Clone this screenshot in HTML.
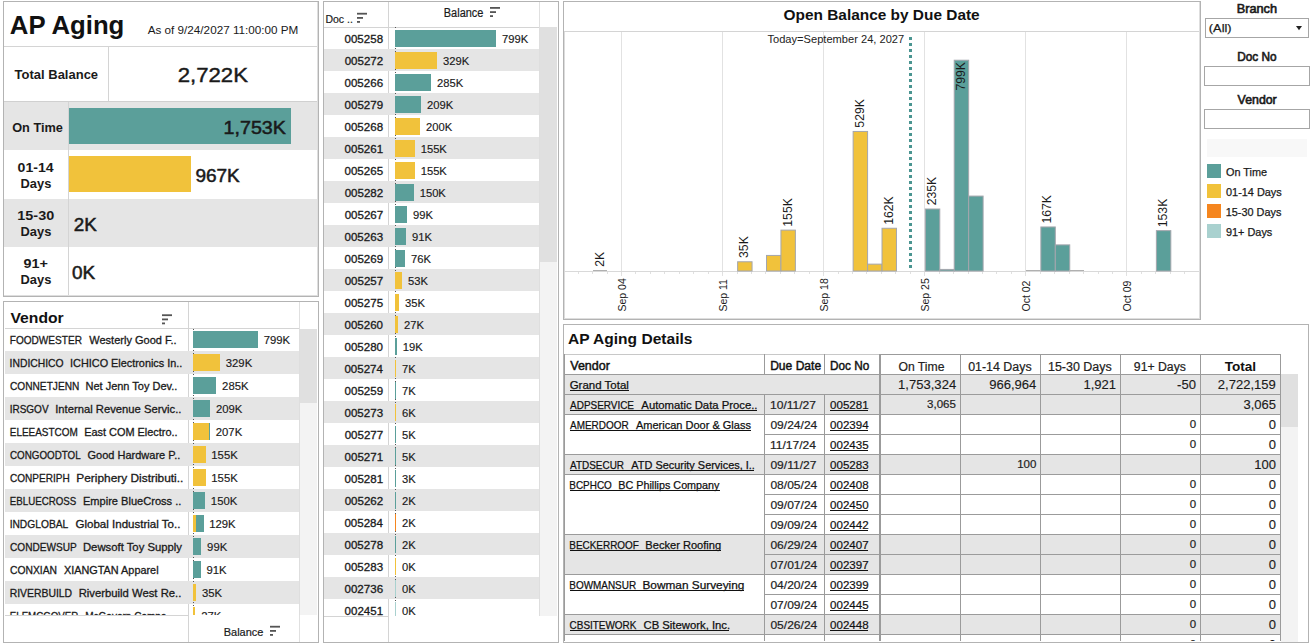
<!DOCTYPE html>
<html><head><meta charset="utf-8"><style>
html,body{margin:0;padding:0;background:#fff;width:1311px;height:643px;overflow:hidden}
svg{display:block}
text{font-family:"Liberation Sans", sans-serif;white-space:pre}
</style></head><body>
<svg width="1311" height="643" viewBox="0 0 1311 643" shape-rendering="crispEdges">
<rect x="0" y="0" width="1311" height="643" fill="#fff"/>
<rect x="3" y="1" width="316" height="1" fill="#b3b3b3" />
<rect x="3" y="296" width="316" height="1" fill="#b3b3b3" />
<rect x="3" y="1" width="1" height="296" fill="#b3b3b3" />
<rect x="318" y="1" width="1" height="296" fill="#b3b3b3" />
<text x="9.86" y="34.00" font-size="26.5" font-weight="bold" fill="#111" textLength="114.50" lengthAdjust="spacingAndGlyphs" >AP Aging</text>
<text x="147.70" y="34.00" font-size="11.2" font-weight="normal" fill="#1a1a1a" textLength="150.69" lengthAdjust="spacingAndGlyphs" >As of 9/24/2027 11:00:00 PM</text>
<rect x="4" y="46" width="314" height="1" fill="#d4d4d4" />
<text x="14.57" y="79.40" font-size="13" font-weight="bold" fill="#1a1a1a" textLength="83.52" lengthAdjust="spacingAndGlyphs" >Total Balance</text>
<rect x="108" y="47" width="1" height="54" fill="#d4d4d4" />
<text x="177.69" y="82.00" font-size="20" font-weight="normal" fill="#1a1a1a" stroke="#1a1a1a" stroke-width="0.4" textLength="70.22" lengthAdjust="spacingAndGlyphs" >2,722K</text>
<rect x="4" y="101" width="314" height="1" fill="#d0d0d0" />
<rect x="4" y="102" width="314" height="48" fill="#e5e5e5" />
<rect x="4" y="150" width="314" height="49" fill="#ffffff" />
<rect x="4" y="199" width="314" height="48" fill="#e5e5e5" />
<rect x="4" y="247" width="314" height="49" fill="#ffffff" />
<rect x="68" y="102" width="1" height="194" fill="#d4d4d4" />
<text x="12.19" y="132.00" font-size="12.3" font-weight="bold" fill="#1a1a1a" textLength="50.79" lengthAdjust="spacingAndGlyphs" >On Time</text>
<text x="17.64" y="172.10" font-size="12.3" font-weight="bold" fill="#1a1a1a" textLength="36.07" lengthAdjust="spacingAndGlyphs" >01-14</text>
<text x="20.56" y="187.80" font-size="12.3" font-weight="bold" fill="#1a1a1a" textLength="30.76" lengthAdjust="spacingAndGlyphs" >Days</text>
<text x="17.33" y="220.20" font-size="12.3" font-weight="bold" fill="#1a1a1a" textLength="36.88" lengthAdjust="spacingAndGlyphs" >15-30</text>
<text x="20.56" y="235.80" font-size="12.3" font-weight="bold" fill="#1a1a1a" textLength="30.76" lengthAdjust="spacingAndGlyphs" >Days</text>
<text x="23.50" y="267.70" font-size="12.3" font-weight="bold" fill="#1a1a1a" textLength="24.40" lengthAdjust="spacingAndGlyphs" >91+</text>
<text x="20.56" y="283.60" font-size="12.3" font-weight="bold" fill="#1a1a1a" textLength="30.76" lengthAdjust="spacingAndGlyphs" >Days</text>
<rect x="69" y="108" width="222" height="36" fill="#5b9f9a" />
<rect x="69" y="156" width="122" height="36" fill="#f1c23b" />
<text x="223.57" y="133.60" font-size="17.5" font-weight="normal" fill="#1a1a1a" stroke="#1a1a1a" stroke-width="0.5" textLength="62.36" lengthAdjust="spacingAndGlyphs" >1,753K</text>
<text x="195.40" y="181.80" font-size="17.5" font-weight="normal" fill="#1a1a1a" stroke="#1a1a1a" stroke-width="0.5" textLength="44.35" lengthAdjust="spacingAndGlyphs" >967K</text>
<text x="73.81" y="230.70" font-size="17.5" font-weight="normal" fill="#1a1a1a" stroke="#1a1a1a" stroke-width="0.5" textLength="22.99" lengthAdjust="spacingAndGlyphs" >2K</text>
<text x="71.99" y="278.80" font-size="17.5" font-weight="normal" fill="#1a1a1a" stroke="#1a1a1a" stroke-width="0.5" textLength="23.21" lengthAdjust="spacingAndGlyphs" >0K</text>
<rect x="3" y="301" width="316" height="1" fill="#b3b3b3" />
<rect x="3" y="642" width="316" height="1" fill="#b3b3b3" />
<rect x="3" y="301" width="1" height="342" fill="#b3b3b3" />
<rect x="318" y="301" width="1" height="342" fill="#b3b3b3" />
<text x="10.52" y="323.00" font-size="15" font-weight="bold" fill="#111" textLength="53.21" lengthAdjust="spacingAndGlyphs" >Vendor</text>
<g shape-rendering="auto"><rect x="162" y="314.3" width="10" height="1.8" fill="#555"/><rect x="162" y="318.5" width="6" height="1.8" fill="#555"/><rect x="162" y="322.5" width="3" height="1.8" fill="#555"/></g>
<rect x="5" y="328" width="294" height="1" fill="#d4d4d4" />
<rect x="188" y="302" width="1" height="340" fill="#d4d4d4" />
<rect x="299" y="302" width="1" height="340" fill="#e0e0e0" />
<clipPath id="vclip"><rect x="5" y="329" width="294" height="286"/></clipPath><g clip-path="url(#vclip)">
<rect x="5" y="351" width="294" height="23" fill="#e5e5e5" />
<rect x="5" y="397" width="294" height="23" fill="#e5e5e5" />
<rect x="5" y="443" width="294" height="23" fill="#e5e5e5" />
<rect x="5" y="489" width="294" height="23" fill="#e5e5e5" />
<rect x="5" y="535" width="294" height="23" fill="#e5e5e5" />
<rect x="5" y="581" width="294" height="23" fill="#e5e5e5" />
<line x1="193.5" y1="329" x2="193.5" y2="615" stroke="#555" stroke-width="1" stroke-dasharray="1 2"/>
<text x="9.74" y="344.10" font-size="11" font-weight="normal" fill="#1a1a1a" stroke="#1a1a1a" stroke-width="0.3" textLength="72.18" lengthAdjust="spacingAndGlyphs" >FOODWESTER</text>
<text x="89.29" y="344.10" font-size="11" font-weight="normal" fill="#1a1a1a" stroke="#1a1a1a" stroke-width="0.3" textLength="87.29" lengthAdjust="spacingAndGlyphs" >Westerly Good F..</text>
<rect x="193.30" y="331" width="64.64" height="17" fill="#5b9f9a" />
<text x="263.67" y="344.10" font-size="11" font-weight="normal" fill="#1a1a1a" stroke="#1a1a1a" stroke-width="0.15" textLength="26.46" lengthAdjust="spacingAndGlyphs" >799K</text>
<text x="9.62" y="367.10" font-size="11" font-weight="normal" fill="#1a1a1a" stroke="#1a1a1a" stroke-width="0.3" textLength="54.02" lengthAdjust="spacingAndGlyphs" >INDICHICO</text>
<text x="70.07" y="367.10" font-size="11" font-weight="normal" fill="#1a1a1a" stroke="#1a1a1a" stroke-width="0.3" textLength="112.27" lengthAdjust="spacingAndGlyphs" >ICHICO Electronics In..</text>
<rect x="193.30" y="354" width="26.62" height="17" fill="#f1c23b" />
<text x="225.76" y="367.10" font-size="11" font-weight="normal" fill="#1a1a1a" stroke="#1a1a1a" stroke-width="0.15" textLength="26.46" lengthAdjust="spacingAndGlyphs" >329K</text>
<text x="10.04" y="390.10" font-size="11" font-weight="normal" fill="#1a1a1a" stroke="#1a1a1a" stroke-width="0.3" textLength="69.25" lengthAdjust="spacingAndGlyphs" >CONNETJENN</text>
<text x="85.47" y="390.10" font-size="11" font-weight="normal" fill="#1a1a1a" stroke="#1a1a1a" stroke-width="0.3" textLength="91.88" lengthAdjust="spacingAndGlyphs" >Net Jenn Toy Dev..</text>
<rect x="193.30" y="377" width="23.06" height="17" fill="#5b9f9a" />
<text x="222.09" y="390.10" font-size="11" font-weight="normal" fill="#1a1a1a" stroke="#1a1a1a" stroke-width="0.15" textLength="26.46" lengthAdjust="spacingAndGlyphs" >285K</text>
<text x="9.65" y="413.10" font-size="11" font-weight="normal" fill="#1a1a1a" stroke="#1a1a1a" stroke-width="0.3" textLength="38.95" lengthAdjust="spacingAndGlyphs" >IRSGOV</text>
<text x="55.24" y="413.10" font-size="11" font-weight="normal" fill="#1a1a1a" stroke="#1a1a1a" stroke-width="0.3" textLength="126.16" lengthAdjust="spacingAndGlyphs" >Internal Revenue Servic..</text>
<rect x="193.30" y="400" width="16.91" height="17" fill="#5b9f9a" />
<text x="215.94" y="413.10" font-size="11" font-weight="normal" fill="#1a1a1a" stroke="#1a1a1a" stroke-width="0.15" textLength="26.46" lengthAdjust="spacingAndGlyphs" >209K</text>
<text x="9.75" y="436.10" font-size="11" font-weight="normal" fill="#1a1a1a" stroke="#1a1a1a" stroke-width="0.3" textLength="68.04" lengthAdjust="spacingAndGlyphs" >ELEEASTCOM</text>
<text x="84.18" y="436.10" font-size="11" font-weight="normal" fill="#1a1a1a" stroke="#1a1a1a" stroke-width="0.3" textLength="93.49" lengthAdjust="spacingAndGlyphs" >East COM Electro..</text>
<rect x="193.30" y="423" width="15.78" height="17" fill="#f1c23b" />
<rect x="209.08" y="423" width="0.97" height="17" fill="#5b9f9a" />
<text x="215.78" y="436.10" font-size="11" font-weight="normal" fill="#1a1a1a" stroke="#1a1a1a" stroke-width="0.15" textLength="26.46" lengthAdjust="spacingAndGlyphs" >207K</text>
<text x="10.06" y="459.10" font-size="11" font-weight="normal" fill="#1a1a1a" stroke="#1a1a1a" stroke-width="0.3" textLength="70.58" lengthAdjust="spacingAndGlyphs" >CONGOODTOL</text>
<text x="87.50" y="459.10" font-size="11" font-weight="normal" fill="#1a1a1a" stroke="#1a1a1a" stroke-width="0.3" textLength="92.85" lengthAdjust="spacingAndGlyphs" >Good Hardware P..</text>
<rect x="193.30" y="446" width="12.54" height="17" fill="#f1c23b" />
<text x="211.29" y="459.10" font-size="11" font-weight="normal" fill="#1a1a1a" stroke="#1a1a1a" stroke-width="0.15" textLength="26.46" lengthAdjust="spacingAndGlyphs" >155K</text>
<text x="10.05" y="482.10" font-size="11" font-weight="normal" fill="#1a1a1a" stroke="#1a1a1a" stroke-width="0.3" textLength="59.71" lengthAdjust="spacingAndGlyphs" >CONPERIPH</text>
<text x="76.30" y="482.10" font-size="11" font-weight="normal" fill="#1a1a1a" stroke="#1a1a1a" stroke-width="0.3" textLength="107.06" lengthAdjust="spacingAndGlyphs" >Periphery Distributi..</text>
<rect x="193.30" y="469" width="12.54" height="17" fill="#f1c23b" />
<text x="211.29" y="482.10" font-size="11" font-weight="normal" fill="#1a1a1a" stroke="#1a1a1a" stroke-width="0.15" textLength="26.46" lengthAdjust="spacingAndGlyphs" >155K</text>
<text x="9.77" y="505.10" font-size="11" font-weight="normal" fill="#1a1a1a" stroke="#1a1a1a" stroke-width="0.3" textLength="66.42" lengthAdjust="spacingAndGlyphs" >EBLUECROSS</text>
<text x="82.96" y="505.10" font-size="11" font-weight="normal" fill="#1a1a1a" stroke="#1a1a1a" stroke-width="0.3" textLength="98.40" lengthAdjust="spacingAndGlyphs" >Empire BlueCross ..</text>
<rect x="193.30" y="492" width="12.13" height="17" fill="#5b9f9a" />
<text x="210.89" y="505.10" font-size="11" font-weight="normal" fill="#1a1a1a" stroke="#1a1a1a" stroke-width="0.15" textLength="26.46" lengthAdjust="spacingAndGlyphs" >150K</text>
<text x="9.63" y="528.10" font-size="11" font-weight="normal" fill="#1a1a1a" stroke="#1a1a1a" stroke-width="0.3" textLength="58.62" lengthAdjust="spacingAndGlyphs" >INDGLOBAL</text>
<text x="75.47" y="528.10" font-size="11" font-weight="normal" fill="#1a1a1a" stroke="#1a1a1a" stroke-width="0.3" textLength="104.95" lengthAdjust="spacingAndGlyphs" >Global Industrial To..</text>
<rect x="193.30" y="515" width="2.83" height="17" fill="#f1c23b" />
<rect x="196.13" y="515" width="7.60" height="17" fill="#5b9f9a" />
<text x="209.19" y="528.10" font-size="11" font-weight="normal" fill="#1a1a1a" stroke="#1a1a1a" stroke-width="0.15" textLength="26.46" lengthAdjust="spacingAndGlyphs" >129K</text>
<text x="10.05" y="551.10" font-size="11" font-weight="normal" fill="#1a1a1a" stroke="#1a1a1a" stroke-width="0.3" textLength="66.62" lengthAdjust="spacingAndGlyphs" >CONDEWSUP</text>
<text x="82.95" y="551.10" font-size="11" font-weight="normal" fill="#1a1a1a" stroke="#1a1a1a" stroke-width="0.3" textLength="99.09" lengthAdjust="spacingAndGlyphs" >Dewsoft Toy Supply</text>
<rect x="193.30" y="538" width="8.01" height="17" fill="#5b9f9a" />
<text x="207.10" y="551.10" font-size="11" font-weight="normal" fill="#1a1a1a" stroke="#1a1a1a" stroke-width="0.15" textLength="20.16" lengthAdjust="spacingAndGlyphs" >99K</text>
<text x="10.03" y="574.10" font-size="11" font-weight="normal" fill="#1a1a1a" stroke="#1a1a1a" stroke-width="0.3" textLength="47.06" lengthAdjust="spacingAndGlyphs" >CONXIAN</text>
<text x="63.88" y="574.10" font-size="11" font-weight="normal" fill="#1a1a1a" stroke="#1a1a1a" stroke-width="0.3" textLength="94.70" lengthAdjust="spacingAndGlyphs" >XIANGTAN Apparel</text>
<rect x="193.30" y="561" width="7.36" height="17" fill="#5b9f9a" />
<text x="206.45" y="574.10" font-size="11" font-weight="normal" fill="#1a1a1a" stroke="#1a1a1a" stroke-width="0.15" textLength="20.16" lengthAdjust="spacingAndGlyphs" >91K</text>
<text x="9.72" y="597.10" font-size="11" font-weight="normal" fill="#1a1a1a" stroke="#1a1a1a" stroke-width="0.3" textLength="62.42" lengthAdjust="spacingAndGlyphs" >RIVERBUILD</text>
<text x="78.65" y="597.10" font-size="11" font-weight="normal" fill="#1a1a1a" stroke="#1a1a1a" stroke-width="0.3" textLength="102.73" lengthAdjust="spacingAndGlyphs" >Riverbuild West Re..</text>
<rect x="193.30" y="584" width="2.83" height="17" fill="#f1c23b" />
<text x="201.98" y="597.10" font-size="11" font-weight="normal" fill="#1a1a1a" stroke="#1a1a1a" stroke-width="0.15" textLength="20.16" lengthAdjust="spacingAndGlyphs" >35K</text>
<text x="9.77" y="620.10" font-size="11" font-weight="normal" fill="#1a1a1a" stroke="#1a1a1a" stroke-width="0.3" textLength="68.54" lengthAdjust="spacingAndGlyphs" >ELEMCGOVER</text>
<text x="85.15" y="620.10" font-size="11" font-weight="normal" fill="#1a1a1a" stroke="#1a1a1a" stroke-width="0.3" textLength="86.95" lengthAdjust="spacingAndGlyphs" >McGovern Compa..</text>
<rect x="193.30" y="607" width="2.18" height="17" fill="#f1c23b" />
<text x="201.22" y="620.10" font-size="11" font-weight="normal" fill="#1a1a1a" stroke="#1a1a1a" stroke-width="0.15" textLength="20.16" lengthAdjust="spacingAndGlyphs" >27K</text>
</g>
<rect x="5" y="615" width="183" height="1" fill="#d4d4d4" />
<rect x="300" y="329" width="17" height="286" fill="#f3f3f3" />
<rect x="300" y="329" width="17" height="74" fill="#e0e0e0" />
<rect x="299" y="329" width="1" height="286" fill="#dedede" />
<text x="223.72" y="636.00" font-size="11.5" font-weight="normal" fill="#1a1a1a" stroke="#1a1a1a" stroke-width="0.2" textLength="39.66" lengthAdjust="spacingAndGlyphs" >Balance</text>
<g shape-rendering="auto"><rect x="270" y="625.8" width="10" height="1.8" fill="#555"/><rect x="270" y="630.0" width="6" height="1.8" fill="#555"/><rect x="270" y="634.0" width="3" height="1.8" fill="#555"/></g>
<rect x="323" y="1" width="236" height="1" fill="#b3b3b3" />
<rect x="323" y="642" width="236" height="1" fill="#b3b3b3" />
<rect x="323" y="1" width="1" height="642" fill="#b3b3b3" />
<rect x="558" y="1" width="1" height="642" fill="#b3b3b3" />
<text x="325.46" y="22.80" font-size="11.5" font-weight="normal" fill="#1a1a1a" stroke="#1a1a1a" stroke-width="0.2" textLength="27.40" lengthAdjust="spacingAndGlyphs" >Doc ..</text>
<g shape-rendering="auto"><rect x="357" y="12.8" width="10" height="1.8" fill="#555"/><rect x="357" y="17.0" width="6" height="1.8" fill="#555"/><rect x="357" y="21.0" width="3" height="1.8" fill="#555"/></g>
<text x="443.82" y="17.00" font-size="12" font-weight="normal" fill="#1a1a1a" stroke="#1a1a1a" stroke-width="0.2" textLength="39.56" lengthAdjust="spacingAndGlyphs" >Balance</text>
<g shape-rendering="auto"><rect x="490" y="7" width="10" height="1.8" fill="#555"/><rect x="490" y="11.2" width="6" height="1.8" fill="#555"/><rect x="490" y="15.2" width="3" height="1.8" fill="#555"/></g>
<rect x="324" y="27" width="216" height="1" fill="#d4d4d4" />
<rect x="388" y="2" width="1" height="640" fill="#d4d4d4" />
<rect x="539" y="2" width="1" height="25" fill="#e0e0e0" />
<clipPath id="dclip"><rect x="324" y="27" width="215" height="589"/></clipPath><g clip-path="url(#dclip)">
<rect x="324" y="49" width="215" height="22" fill="#e5e5e5" />
<rect x="324" y="93" width="215" height="22" fill="#e5e5e5" />
<rect x="324" y="137" width="215" height="22" fill="#e5e5e5" />
<rect x="324" y="181" width="215" height="22" fill="#e5e5e5" />
<rect x="324" y="225" width="215" height="22" fill="#e5e5e5" />
<rect x="324" y="269" width="215" height="22" fill="#e5e5e5" />
<rect x="324" y="313" width="215" height="22" fill="#e5e5e5" />
<rect x="324" y="357" width="215" height="22" fill="#e5e5e5" />
<rect x="324" y="401" width="215" height="22" fill="#e5e5e5" />
<rect x="324" y="445" width="215" height="22" fill="#e5e5e5" />
<rect x="324" y="489" width="215" height="22" fill="#e5e5e5" />
<rect x="324" y="533" width="215" height="22" fill="#e5e5e5" />
<rect x="324" y="577" width="215" height="22" fill="#e5e5e5" />
<line x1="395.5" y1="27" x2="395.5" y2="616" stroke="#555" stroke-width="1" stroke-dasharray="1 2"/>
<text x="344.54" y="42.80" font-size="11" font-weight="normal" fill="#1a1a1a" stroke="#1a1a1a" stroke-width="0.3" textLength="38.54" lengthAdjust="spacingAndGlyphs" >005258</text>
<rect x="395" y="30" width="101" height="17" fill="#5b9f9a" />
<text x="501.94" y="42.80" font-size="11" font-weight="normal" fill="#1a1a1a" stroke="#1a1a1a" stroke-width="0.15" textLength="26.20" lengthAdjust="spacingAndGlyphs" >799K</text>
<text x="344.66" y="64.80" font-size="11" font-weight="normal" fill="#1a1a1a" stroke="#1a1a1a" stroke-width="0.3" textLength="38.54" lengthAdjust="spacingAndGlyphs" >005272</text>
<rect x="395" y="52" width="42" height="17" fill="#f1c23b" />
<text x="443.05" y="64.80" font-size="11" font-weight="normal" fill="#1a1a1a" stroke="#1a1a1a" stroke-width="0.15" textLength="26.20" lengthAdjust="spacingAndGlyphs" >329K</text>
<text x="344.54" y="86.80" font-size="11" font-weight="normal" fill="#1a1a1a" stroke="#1a1a1a" stroke-width="0.3" textLength="38.54" lengthAdjust="spacingAndGlyphs" >005266</text>
<rect x="395" y="74" width="36" height="17" fill="#5b9f9a" />
<text x="436.94" y="86.80" font-size="11" font-weight="normal" fill="#1a1a1a" stroke="#1a1a1a" stroke-width="0.15" textLength="26.20" lengthAdjust="spacingAndGlyphs" >285K</text>
<text x="344.60" y="108.80" font-size="11" font-weight="normal" fill="#1a1a1a" stroke="#1a1a1a" stroke-width="0.3" textLength="38.54" lengthAdjust="spacingAndGlyphs" >005279</text>
<rect x="395" y="96" width="26" height="17" fill="#5b9f9a" />
<text x="426.94" y="108.80" font-size="11" font-weight="normal" fill="#1a1a1a" stroke="#1a1a1a" stroke-width="0.15" textLength="26.20" lengthAdjust="spacingAndGlyphs" >209K</text>
<text x="344.54" y="130.80" font-size="11" font-weight="normal" fill="#1a1a1a" stroke="#1a1a1a" stroke-width="0.3" textLength="38.54" lengthAdjust="spacingAndGlyphs" >005268</text>
<rect x="395" y="118" width="25" height="17" fill="#f1c23b" />
<text x="425.94" y="130.80" font-size="11" font-weight="normal" fill="#1a1a1a" stroke="#1a1a1a" stroke-width="0.15" textLength="26.20" lengthAdjust="spacingAndGlyphs" >200K</text>
<text x="344.60" y="152.80" font-size="11" font-weight="normal" fill="#1a1a1a" stroke="#1a1a1a" stroke-width="0.3" textLength="38.54" lengthAdjust="spacingAndGlyphs" >005261</text>
<rect x="395" y="140" width="20" height="17" fill="#f1c23b" />
<text x="420.66" y="152.80" font-size="11" font-weight="normal" fill="#1a1a1a" stroke="#1a1a1a" stroke-width="0.15" textLength="26.20" lengthAdjust="spacingAndGlyphs" >155K</text>
<text x="344.54" y="174.80" font-size="11" font-weight="normal" fill="#1a1a1a" stroke="#1a1a1a" stroke-width="0.3" textLength="38.54" lengthAdjust="spacingAndGlyphs" >005265</text>
<rect x="395" y="162" width="20" height="17" fill="#f1c23b" />
<text x="420.66" y="174.80" font-size="11" font-weight="normal" fill="#1a1a1a" stroke="#1a1a1a" stroke-width="0.15" textLength="26.20" lengthAdjust="spacingAndGlyphs" >155K</text>
<text x="344.66" y="196.80" font-size="11" font-weight="normal" fill="#1a1a1a" stroke="#1a1a1a" stroke-width="0.3" textLength="38.54" lengthAdjust="spacingAndGlyphs" >005282</text>
<rect x="395" y="184" width="19" height="17" fill="#5b9f9a" />
<text x="419.66" y="196.80" font-size="11" font-weight="normal" fill="#1a1a1a" stroke="#1a1a1a" stroke-width="0.15" textLength="26.20" lengthAdjust="spacingAndGlyphs" >150K</text>
<text x="344.66" y="218.80" font-size="11" font-weight="normal" fill="#1a1a1a" stroke="#1a1a1a" stroke-width="0.3" textLength="38.54" lengthAdjust="spacingAndGlyphs" >005267</text>
<rect x="395" y="206" width="12" height="17" fill="#5b9f9a" />
<text x="413.00" y="218.80" font-size="11" font-weight="normal" fill="#1a1a1a" stroke="#1a1a1a" stroke-width="0.15" textLength="19.96" lengthAdjust="spacingAndGlyphs" >99K</text>
<text x="344.54" y="240.80" font-size="11" font-weight="normal" fill="#1a1a1a" stroke="#1a1a1a" stroke-width="0.3" textLength="38.54" lengthAdjust="spacingAndGlyphs" >005263</text>
<rect x="395" y="228" width="11" height="17" fill="#5b9f9a" />
<text x="412.00" y="240.80" font-size="11" font-weight="normal" fill="#1a1a1a" stroke="#1a1a1a" stroke-width="0.15" textLength="19.96" lengthAdjust="spacingAndGlyphs" >91K</text>
<text x="344.60" y="262.80" font-size="11" font-weight="normal" fill="#1a1a1a" stroke="#1a1a1a" stroke-width="0.3" textLength="38.54" lengthAdjust="spacingAndGlyphs" >005269</text>
<rect x="395" y="250" width="10" height="17" fill="#5b9f9a" />
<text x="410.94" y="262.80" font-size="11" font-weight="normal" fill="#1a1a1a" stroke="#1a1a1a" stroke-width="0.15" textLength="19.96" lengthAdjust="spacingAndGlyphs" >76K</text>
<text x="344.66" y="284.80" font-size="11" font-weight="normal" fill="#1a1a1a" stroke="#1a1a1a" stroke-width="0.3" textLength="38.54" lengthAdjust="spacingAndGlyphs" >005257</text>
<rect x="395" y="272" width="7" height="17" fill="#f1c23b" />
<text x="408.05" y="284.80" font-size="11" font-weight="normal" fill="#1a1a1a" stroke="#1a1a1a" stroke-width="0.15" textLength="19.96" lengthAdjust="spacingAndGlyphs" >53K</text>
<text x="344.54" y="306.80" font-size="11" font-weight="normal" fill="#1a1a1a" stroke="#1a1a1a" stroke-width="0.3" textLength="38.54" lengthAdjust="spacingAndGlyphs" >005275</text>
<rect x="395" y="294" width="4" height="17" fill="#f1c23b" />
<text x="405.05" y="306.80" font-size="11" font-weight="normal" fill="#1a1a1a" stroke="#1a1a1a" stroke-width="0.15" textLength="19.96" lengthAdjust="spacingAndGlyphs" >35K</text>
<text x="344.49" y="328.80" font-size="11" font-weight="normal" fill="#1a1a1a" stroke="#1a1a1a" stroke-width="0.3" textLength="38.54" lengthAdjust="spacingAndGlyphs" >005260</text>
<rect x="395" y="316" width="3" height="17" fill="#f1c23b" />
<text x="403.94" y="328.80" font-size="11" font-weight="normal" fill="#1a1a1a" stroke="#1a1a1a" stroke-width="0.15" textLength="19.96" lengthAdjust="spacingAndGlyphs" >27K</text>
<text x="344.49" y="350.80" font-size="11" font-weight="normal" fill="#1a1a1a" stroke="#1a1a1a" stroke-width="0.3" textLength="38.54" lengthAdjust="spacingAndGlyphs" >005280</text>
<rect x="395" y="338" width="2" height="17" fill="#5b9f9a" />
<text x="402.66" y="350.80" font-size="11" font-weight="normal" fill="#1a1a1a" stroke="#1a1a1a" stroke-width="0.15" textLength="19.96" lengthAdjust="spacingAndGlyphs" >19K</text>
<text x="344.43" y="372.80" font-size="11" font-weight="normal" fill="#1a1a1a" stroke="#1a1a1a" stroke-width="0.3" textLength="38.54" lengthAdjust="spacingAndGlyphs" >005274</text>
<rect x="395" y="360" width="1" height="17" fill="#f1c23b" />
<text x="401.94" y="372.80" font-size="11" font-weight="normal" fill="#1a1a1a" stroke="#1a1a1a" stroke-width="0.15" textLength="13.72" lengthAdjust="spacingAndGlyphs" >7K</text>
<text x="344.60" y="394.80" font-size="11" font-weight="normal" fill="#1a1a1a" stroke="#1a1a1a" stroke-width="0.3" textLength="38.54" lengthAdjust="spacingAndGlyphs" >005259</text>
<rect x="395" y="382" width="1" height="17" fill="#5b9f9a" />
<text x="401.94" y="394.80" font-size="11" font-weight="normal" fill="#1a1a1a" stroke="#1a1a1a" stroke-width="0.15" textLength="13.72" lengthAdjust="spacingAndGlyphs" >7K</text>
<text x="344.54" y="416.80" font-size="11" font-weight="normal" fill="#1a1a1a" stroke="#1a1a1a" stroke-width="0.3" textLength="38.54" lengthAdjust="spacingAndGlyphs" >005273</text>
<rect x="395" y="404" width="1" height="17" fill="#f1c23b" />
<text x="401.94" y="416.80" font-size="11" font-weight="normal" fill="#1a1a1a" stroke="#1a1a1a" stroke-width="0.15" textLength="13.72" lengthAdjust="spacingAndGlyphs" >6K</text>
<text x="344.66" y="438.80" font-size="11" font-weight="normal" fill="#1a1a1a" stroke="#1a1a1a" stroke-width="0.3" textLength="38.54" lengthAdjust="spacingAndGlyphs" >005277</text>
<rect x="395" y="426" width="1" height="17" fill="#5b9f9a" />
<text x="402.05" y="438.80" font-size="11" font-weight="normal" fill="#1a1a1a" stroke="#1a1a1a" stroke-width="0.15" textLength="13.72" lengthAdjust="spacingAndGlyphs" >5K</text>
<text x="344.60" y="460.80" font-size="11" font-weight="normal" fill="#1a1a1a" stroke="#1a1a1a" stroke-width="0.3" textLength="38.54" lengthAdjust="spacingAndGlyphs" >005271</text>
<rect x="395" y="448" width="1" height="17" fill="#5b9f9a" />
<text x="402.05" y="460.80" font-size="11" font-weight="normal" fill="#1a1a1a" stroke="#1a1a1a" stroke-width="0.15" textLength="13.72" lengthAdjust="spacingAndGlyphs" >5K</text>
<text x="344.60" y="482.80" font-size="11" font-weight="normal" fill="#1a1a1a" stroke="#1a1a1a" stroke-width="0.3" textLength="38.54" lengthAdjust="spacingAndGlyphs" >005281</text>
<rect x="395" y="470" width="1" height="17" fill="#5b9f9a" />
<text x="402.05" y="482.80" font-size="11" font-weight="normal" fill="#1a1a1a" stroke="#1a1a1a" stroke-width="0.15" textLength="13.72" lengthAdjust="spacingAndGlyphs" >3K</text>
<text x="344.66" y="504.80" font-size="11" font-weight="normal" fill="#1a1a1a" stroke="#1a1a1a" stroke-width="0.3" textLength="38.54" lengthAdjust="spacingAndGlyphs" >005262</text>
<rect x="395" y="492" width="1" height="17" fill="#5b9f9a" />
<text x="401.94" y="504.80" font-size="11" font-weight="normal" fill="#1a1a1a" stroke="#1a1a1a" stroke-width="0.15" textLength="13.72" lengthAdjust="spacingAndGlyphs" >2K</text>
<text x="344.43" y="526.80" font-size="11" font-weight="normal" fill="#1a1a1a" stroke="#1a1a1a" stroke-width="0.3" textLength="38.54" lengthAdjust="spacingAndGlyphs" >005284</text>
<rect x="395" y="514" width="1" height="17" fill="#f5861f" />
<text x="401.94" y="526.80" font-size="11" font-weight="normal" fill="#1a1a1a" stroke="#1a1a1a" stroke-width="0.15" textLength="13.72" lengthAdjust="spacingAndGlyphs" >2K</text>
<text x="344.54" y="548.80" font-size="11" font-weight="normal" fill="#1a1a1a" stroke="#1a1a1a" stroke-width="0.3" textLength="38.54" lengthAdjust="spacingAndGlyphs" >005278</text>
<rect x="395" y="536" width="1" height="17" fill="#5b9f9a" />
<text x="401.94" y="548.80" font-size="11" font-weight="normal" fill="#1a1a1a" stroke="#1a1a1a" stroke-width="0.15" textLength="13.72" lengthAdjust="spacingAndGlyphs" >2K</text>
<text x="344.54" y="570.80" font-size="11" font-weight="normal" fill="#1a1a1a" stroke="#1a1a1a" stroke-width="0.3" textLength="38.54" lengthAdjust="spacingAndGlyphs" >005283</text>
<rect x="395" y="558" width="1" height="17" fill="#f1c23b" />
<text x="402.05" y="570.80" font-size="11" font-weight="normal" fill="#1a1a1a" stroke="#1a1a1a" stroke-width="0.15" textLength="13.72" lengthAdjust="spacingAndGlyphs" >0K</text>
<text x="344.54" y="592.80" font-size="11" font-weight="normal" fill="#1a1a1a" stroke="#1a1a1a" stroke-width="0.3" textLength="38.54" lengthAdjust="spacingAndGlyphs" >002736</text>
<rect x="395" y="580" width="1" height="17" fill="#a9d1cf" />
<text x="402.05" y="592.80" font-size="11" font-weight="normal" fill="#1a1a1a" stroke="#1a1a1a" stroke-width="0.15" textLength="13.72" lengthAdjust="spacingAndGlyphs" >0K</text>
<text x="344.60" y="614.80" font-size="11" font-weight="normal" fill="#1a1a1a" stroke="#1a1a1a" stroke-width="0.3" textLength="38.54" lengthAdjust="spacingAndGlyphs" >002451</text>
<rect x="395" y="602" width="1" height="17" fill="#a9d1cf" />
<text x="402.05" y="614.80" font-size="11" font-weight="normal" fill="#1a1a1a" stroke="#1a1a1a" stroke-width="0.15" textLength="13.72" lengthAdjust="spacingAndGlyphs" >0K</text>
</g>
<rect x="324" y="616" width="64" height="1" fill="#d4d4d4" />
<rect x="540" y="27" width="17" height="589" fill="#f3f3f3" />
<rect x="540" y="27" width="17" height="235" fill="#e0e0e0" />
<rect x="539" y="27" width="1" height="589" fill="#dedede" />
<rect x="563" y="1" width="638" height="1" fill="#b3b3b3" />
<rect x="563" y="319" width="638" height="1" fill="#b3b3b3" />
<rect x="563" y="1" width="1" height="319" fill="#b3b3b3" />
<rect x="1200" y="1" width="1" height="319" fill="#b3b3b3" />
<rect x="564" y="32" width="1" height="287" fill="#dcdcdc" />
<text x="783.58" y="20.10" font-size="14.5" font-weight="bold" fill="#111" textLength="196.08" lengthAdjust="spacingAndGlyphs" >Open Balance by Due Date</text>
<rect x="564" y="31" width="635" height="1" fill="#d4d4d4" />
<rect x="621.00" y="32" width="1" height="244" fill="#e2e2e2" />
<g transform="translate(625.50,311) rotate(-90)">
<text x="-0.47" y="0.00" font-size="11.5" font-weight="normal" fill="#222" textLength="33.18" lengthAdjust="spacingAndGlyphs" >Sep 04</text>
</g>
<rect x="722.08" y="32" width="1" height="244" fill="#e2e2e2" />
<g transform="translate(726.58,311) rotate(-90)">
<text x="-0.47" y="0.00" font-size="11.5" font-weight="normal" fill="#222" textLength="32.40" lengthAdjust="spacingAndGlyphs" >Sep 11</text>
</g>
<rect x="823.16" y="32" width="1" height="244" fill="#e2e2e2" />
<g transform="translate(827.66,311) rotate(-90)">
<text x="-0.47" y="0.00" font-size="11.5" font-weight="normal" fill="#222" textLength="33.18" lengthAdjust="spacingAndGlyphs" >Sep 18</text>
</g>
<rect x="924.24" y="32" width="1" height="244" fill="#e2e2e2" />
<g transform="translate(928.74,311) rotate(-90)">
<text x="-0.47" y="0.00" font-size="11.5" font-weight="normal" fill="#222" textLength="33.18" lengthAdjust="spacingAndGlyphs" >Sep 25</text>
</g>
<rect x="1025.32" y="32" width="1" height="244" fill="#e2e2e2" />
<g transform="translate(1029.82,311) rotate(-90)">
<text x="-0.47" y="0.00" font-size="11.5" font-weight="normal" fill="#222" textLength="30.84" lengthAdjust="spacingAndGlyphs" >Oct 02</text>
</g>
<rect x="1126.40" y="32" width="1" height="244" fill="#e2e2e2" />
<g transform="translate(1130.90,311) rotate(-90)">
<text x="-0.47" y="0.00" font-size="11.5" font-weight="normal" fill="#222" textLength="30.84" lengthAdjust="spacingAndGlyphs" >Oct 09</text>
</g>
<rect x="564" y="271" width="635" height="1" fill="#d9d9d9" />
<rect x="577.68" y="272" width="1" height="2" fill="#e0e0e0" />
<rect x="592.12" y="272" width="1" height="2" fill="#e0e0e0" />
<rect x="606.56" y="272" width="1" height="2" fill="#e0e0e0" />
<rect x="621.00" y="272" width="1" height="2" fill="#e0e0e0" />
<rect x="635.44" y="272" width="1" height="2" fill="#e0e0e0" />
<rect x="649.88" y="272" width="1" height="2" fill="#e0e0e0" />
<rect x="664.32" y="272" width="1" height="2" fill="#e0e0e0" />
<rect x="678.76" y="272" width="1" height="2" fill="#e0e0e0" />
<rect x="693.20" y="272" width="1" height="2" fill="#e0e0e0" />
<rect x="707.64" y="272" width="1" height="2" fill="#e0e0e0" />
<rect x="722.08" y="272" width="1" height="2" fill="#e0e0e0" />
<rect x="736.52" y="272" width="1" height="2" fill="#e0e0e0" />
<rect x="750.96" y="272" width="1" height="2" fill="#e0e0e0" />
<rect x="765.40" y="272" width="1" height="2" fill="#e0e0e0" />
<rect x="779.84" y="272" width="1" height="2" fill="#e0e0e0" />
<rect x="794.28" y="272" width="1" height="2" fill="#e0e0e0" />
<rect x="808.72" y="272" width="1" height="2" fill="#e0e0e0" />
<rect x="823.16" y="272" width="1" height="2" fill="#e0e0e0" />
<rect x="837.60" y="272" width="1" height="2" fill="#e0e0e0" />
<rect x="852.04" y="272" width="1" height="2" fill="#e0e0e0" />
<rect x="866.48" y="272" width="1" height="2" fill="#e0e0e0" />
<rect x="880.92" y="272" width="1" height="2" fill="#e0e0e0" />
<rect x="895.36" y="272" width="1" height="2" fill="#e0e0e0" />
<rect x="909.80" y="272" width="1" height="2" fill="#e0e0e0" />
<rect x="924.24" y="272" width="1" height="2" fill="#e0e0e0" />
<rect x="938.68" y="272" width="1" height="2" fill="#e0e0e0" />
<rect x="953.12" y="272" width="1" height="2" fill="#e0e0e0" />
<rect x="967.56" y="272" width="1" height="2" fill="#e0e0e0" />
<rect x="982.00" y="272" width="1" height="2" fill="#e0e0e0" />
<rect x="996.44" y="272" width="1" height="2" fill="#e0e0e0" />
<rect x="1010.88" y="272" width="1" height="2" fill="#e0e0e0" />
<rect x="1025.32" y="272" width="1" height="2" fill="#e0e0e0" />
<rect x="1039.76" y="272" width="1" height="2" fill="#e0e0e0" />
<rect x="1054.20" y="272" width="1" height="2" fill="#e0e0e0" />
<rect x="1068.64" y="272" width="1" height="2" fill="#e0e0e0" />
<rect x="1083.08" y="272" width="1" height="2" fill="#e0e0e0" />
<rect x="1097.52" y="272" width="1" height="2" fill="#e0e0e0" />
<rect x="1111.96" y="272" width="1" height="2" fill="#e0e0e0" />
<rect x="1126.40" y="272" width="1" height="2" fill="#e0e0e0" />
<rect x="1140.84" y="272" width="1" height="2" fill="#e0e0e0" />
<rect x="1155.28" y="272" width="1" height="2" fill="#e0e0e0" />
<rect x="1169.72" y="272" width="1" height="2" fill="#e0e0e0" />
<rect x="1184.16" y="272" width="1" height="2" fill="#e0e0e0" />
<text x="767.48" y="43.00" font-size="11.2" font-weight="normal" fill="#222" textLength="136.77" lengthAdjust="spacingAndGlyphs" >Today=September 24, 2027</text>
<rect x="909" y="37" width="3" height="3" fill="#4a9591" />
<rect x="909" y="43" width="3" height="3" fill="#4a9591" />
<rect x="909" y="49" width="3" height="3" fill="#4a9591" />
<rect x="909" y="55" width="3" height="3" fill="#4a9591" />
<rect x="909" y="61" width="3" height="3" fill="#4a9591" />
<rect x="909" y="67" width="3" height="3" fill="#4a9591" />
<rect x="909" y="73" width="3" height="3" fill="#4a9591" />
<rect x="909" y="79" width="3" height="3" fill="#4a9591" />
<rect x="909" y="85" width="3" height="3" fill="#4a9591" />
<rect x="909" y="91" width="3" height="3" fill="#4a9591" />
<rect x="909" y="97" width="3" height="3" fill="#4a9591" />
<rect x="909" y="103" width="3" height="3" fill="#4a9591" />
<rect x="909" y="109" width="3" height="3" fill="#4a9591" />
<rect x="909" y="115" width="3" height="3" fill="#4a9591" />
<rect x="909" y="121" width="3" height="3" fill="#4a9591" />
<rect x="909" y="127" width="3" height="3" fill="#4a9591" />
<rect x="909" y="133" width="3" height="3" fill="#4a9591" />
<rect x="909" y="139" width="3" height="3" fill="#4a9591" />
<rect x="909" y="145" width="3" height="3" fill="#4a9591" />
<rect x="909" y="151" width="3" height="3" fill="#4a9591" />
<rect x="909" y="157" width="3" height="3" fill="#4a9591" />
<rect x="909" y="163" width="3" height="3" fill="#4a9591" />
<rect x="909" y="169" width="3" height="3" fill="#4a9591" />
<rect x="909" y="175" width="3" height="3" fill="#4a9591" />
<rect x="909" y="181" width="3" height="3" fill="#4a9591" />
<rect x="909" y="187" width="3" height="3" fill="#4a9591" />
<rect x="909" y="193" width="3" height="3" fill="#4a9591" />
<rect x="909" y="199" width="3" height="3" fill="#4a9591" />
<rect x="909" y="205" width="3" height="3" fill="#4a9591" />
<rect x="909" y="211" width="3" height="3" fill="#4a9591" />
<rect x="909" y="217" width="3" height="3" fill="#4a9591" />
<rect x="909" y="223" width="3" height="3" fill="#4a9591" />
<rect x="909" y="229" width="3" height="3" fill="#4a9591" />
<rect x="909" y="235" width="3" height="3" fill="#4a9591" />
<rect x="909" y="241" width="3" height="3" fill="#4a9591" />
<rect x="909" y="247" width="3" height="3" fill="#4a9591" />
<rect x="909" y="253" width="3" height="3" fill="#4a9591" />
<rect x="909" y="259" width="3" height="3" fill="#4a9591" />
<rect x="909" y="265" width="3" height="3" fill="#4a9591" />
<rect x="592.62" y="269.5" width="14.44" height="1.5" fill="#b0b0b0" />
<rect x="737.62" y="261.77" width="14.44" height="9.23" fill="#f1c23b" stroke="#a4a6ad" stroke-width="1" shape-rendering="auto"/>
<rect x="766.50" y="255.44" width="14.44" height="15.56" fill="#f1c23b" stroke="#a4a6ad" stroke-width="1" shape-rendering="auto"/>
<rect x="780.94" y="230.11" width="14.44" height="40.89" fill="#f1c23b" stroke="#a4a6ad" stroke-width="1" shape-rendering="auto"/>
<rect x="853.14" y="131.45" width="14.44" height="139.55" fill="#f1c23b" stroke="#a4a6ad" stroke-width="1" shape-rendering="auto"/>
<rect x="867.58" y="264.14" width="14.44" height="6.86" fill="#f1c23b" stroke="#a4a6ad" stroke-width="1" shape-rendering="auto"/>
<rect x="882.02" y="228.26" width="14.44" height="42.74" fill="#f1c23b" stroke="#a4a6ad" stroke-width="1" shape-rendering="auto"/>
<rect x="925.34" y="209.01" width="14.44" height="61.99" fill="#5b9f9a" stroke="#a4a6ad" stroke-width="1" shape-rendering="auto"/>
<rect x="939.78" y="269.42" width="14.44" height="1.58" fill="#5b9f9a" stroke="#a4a6ad" stroke-width="1" shape-rendering="auto"/>
<rect x="954.22" y="60.22" width="14.44" height="210.78" fill="#5b9f9a" stroke="#a4a6ad" stroke-width="1" shape-rendering="auto"/>
<rect x="968.66" y="196.08" width="14.44" height="74.92" fill="#5b9f9a" stroke="#a4a6ad" stroke-width="1" shape-rendering="auto"/>
<rect x="1025.82" y="269.5" width="14.44" height="1.5" fill="#b0b0b0" />
<rect x="1040.86" y="226.95" width="14.44" height="44.05" fill="#5b9f9a" stroke="#a4a6ad" stroke-width="1" shape-rendering="auto"/>
<rect x="1055.30" y="244.88" width="14.44" height="26.12" fill="#5b9f9a" stroke="#a4a6ad" stroke-width="1" shape-rendering="auto"/>
<rect x="1069.14" y="269.5" width="14.44" height="1.5" fill="#b0b0b0" />
<rect x="1156.38" y="230.64" width="14.44" height="40.36" fill="#5b9f9a" stroke="#a4a6ad" stroke-width="1" shape-rendering="auto"/>
<g transform="translate(603.84,266.17) rotate(-90)">
<text x="-0.61" y="0.00" font-size="12" font-weight="normal" fill="#1a1a1a" textLength="14.97" lengthAdjust="spacingAndGlyphs" >2K</text>
</g>
<g transform="translate(748.24,257.47) rotate(-90)">
<text x="-0.49" y="0.00" font-size="12" font-weight="normal" fill="#1a1a1a" textLength="21.78" lengthAdjust="spacingAndGlyphs" >35K</text>
</g>
<g transform="translate(791.56,225.81) rotate(-90)">
<text x="-0.92" y="0.00" font-size="12" font-weight="normal" fill="#1a1a1a" textLength="28.59" lengthAdjust="spacingAndGlyphs" >155K</text>
</g>
<g transform="translate(863.76,127.15) rotate(-90)">
<text x="-0.49" y="0.00" font-size="12" font-weight="normal" fill="#1a1a1a" textLength="28.59" lengthAdjust="spacingAndGlyphs" >529K</text>
</g>
<g transform="translate(892.64,223.96) rotate(-90)">
<text x="-0.92" y="0.00" font-size="12" font-weight="normal" fill="#1a1a1a" textLength="28.59" lengthAdjust="spacingAndGlyphs" >162K</text>
</g>
<g transform="translate(935.96,204.71) rotate(-90)">
<text x="-0.61" y="0.00" font-size="12" font-weight="normal" fill="#1a1a1a" textLength="28.59" lengthAdjust="spacingAndGlyphs" >235K</text>
</g>
<g transform="translate(964.84,90.00) rotate(-90)">
<text x="-0.61" y="0.00" font-size="12" font-weight="normal" fill="#1a1a1a" textLength="28.59" lengthAdjust="spacingAndGlyphs" >799K</text>
</g>
<g transform="translate(1051.48,222.65) rotate(-90)">
<text x="-0.92" y="0.00" font-size="12" font-weight="normal" fill="#1a1a1a" textLength="28.59" lengthAdjust="spacingAndGlyphs" >167K</text>
</g>
<g transform="translate(1167.00,226.34) rotate(-90)">
<text x="-0.92" y="0.00" font-size="12" font-weight="normal" fill="#1a1a1a" textLength="28.59" lengthAdjust="spacingAndGlyphs" >153K</text>
</g>
<text x="1236.68" y="13.10" font-size="12" font-weight="normal" fill="#1a1a1a" stroke="#1a1a1a" stroke-width="0.6" textLength="40.29" lengthAdjust="spacingAndGlyphs" >Branch</text>
<rect x="1205.5" y="18.5" width="103" height="19" fill="#fff" stroke="#a6a6a6" stroke-width="1"/>
<text x="1208.86" y="32.30" font-size="11.5" font-weight="normal" fill="#1a1a1a" stroke="#1a1a1a" stroke-width="0.25" textLength="22.72" lengthAdjust="spacingAndGlyphs" >(All)</text>
<path d="M1296 26 L1302 26 L1299 30.2 Z" fill="#222" shape-rendering="auto"/>
<text x="1237.15" y="60.60" font-size="12" font-weight="normal" fill="#1a1a1a" stroke="#1a1a1a" stroke-width="0.6" textLength="39.41" lengthAdjust="spacingAndGlyphs" >Doc No</text>
<rect x="1204.5" y="66.5" width="105" height="19" fill="#fff" stroke="#a6a6a6" stroke-width="1"/>
<text x="1237.64" y="103.50" font-size="12" font-weight="normal" fill="#1a1a1a" stroke="#1a1a1a" stroke-width="0.6" textLength="39.10" lengthAdjust="spacingAndGlyphs" >Vendor</text>
<rect x="1204.5" y="109.5" width="105" height="19" fill="#fff" stroke="#a6a6a6" stroke-width="1"/>
<rect x="1207" y="139" width="100" height="18" fill="#f8f8f8" />
<rect x="1207" y="164" width="14" height="14" fill="#5b9f9a" />
<text x="1226.01" y="176.00" font-size="11" font-weight="normal" fill="#1a1a1a" stroke="#1a1a1a" stroke-width="0.25" textLength="41.15" lengthAdjust="spacingAndGlyphs" >On Time</text>
<rect x="1207" y="184" width="14" height="14" fill="#f1c23b" />
<text x="1226.06" y="196.00" font-size="11" font-weight="normal" fill="#1a1a1a" stroke="#1a1a1a" stroke-width="0.25" textLength="55.69" lengthAdjust="spacingAndGlyphs" >01-14 Days</text>
<rect x="1207" y="204" width="14" height="14" fill="#f5861f" />
<text x="1225.68" y="216.00" font-size="11" font-weight="normal" fill="#1a1a1a" stroke="#1a1a1a" stroke-width="0.25" textLength="55.69" lengthAdjust="spacingAndGlyphs" >15-30 Days</text>
<rect x="1207" y="224" width="14" height="14" fill="#a9d1cf" />
<text x="1226.01" y="236.00" font-size="11" font-weight="normal" fill="#1a1a1a" stroke="#1a1a1a" stroke-width="0.25" textLength="46.31" lengthAdjust="spacingAndGlyphs" >91+ Days</text>
<rect x="563" y="324" width="746" height="1" fill="#b3b3b3" />
<rect x="563" y="324" width="1" height="319" fill="#b3b3b3" />
<rect x="1308" y="324" width="1" height="319" fill="#b3b3b3" />
<rect x="563" y="642" width="746" height="1" fill="#b3b3b3" />
<text x="568.01" y="344.00" font-size="15.5" font-weight="bold" fill="#111" textLength="124.44" lengthAdjust="spacingAndGlyphs" >AP Aging Details</text>
<clipPath id="tclip"><rect x="564" y="354" width="744" height="287"/></clipPath><g clip-path="url(#tclip)">
<rect x="565" y="374" width="715" height="20" fill="#e5e5e5" />
<rect x="565" y="394" width="715" height="20" fill="#e5e5e5" />
<rect x="565" y="454" width="715" height="20" fill="#e5e5e5" />
<rect x="565" y="534" width="715" height="20" fill="#e5e5e5" />
<rect x="565" y="554" width="715" height="20" fill="#e5e5e5" />
<rect x="565" y="614" width="715" height="20" fill="#e5e5e5" />
<rect x="564" y="354" width="316" height="1" fill="#c8c8c8" />
<rect x="880" y="354" width="401" height="1" fill="#9b9b9b" />
<rect x="564" y="374" width="717" height="1" fill="#9b9b9b" />
<rect x="564" y="354" width="1" height="289" fill="#9b9b9b" />
<rect x="764" y="354" width="1" height="20" fill="#9b9b9b" />
<rect x="764" y="394" width="1" height="249" fill="#9b9b9b" />
<rect x="824" y="354" width="1" height="20" fill="#9b9b9b" />
<rect x="824" y="394" width="1" height="249" fill="#9b9b9b" />
<rect x="879" y="354" width="2" height="289" fill="#9b9b9b" />
<rect x="960" y="354" width="1" height="289" fill="#9b9b9b" />
<rect x="1040" y="354" width="1" height="289" fill="#9b9b9b" />
<rect x="1120" y="354" width="1" height="289" fill="#9b9b9b" />
<rect x="1200" y="354" width="1" height="289" fill="#9b9b9b" />
<rect x="1280" y="354" width="1" height="289" fill="#9b9b9b" />
<text x="570.26" y="369.70" font-size="12" font-weight="normal" fill="#111" stroke="#111" stroke-width="0.45" textLength="39.66" lengthAdjust="spacingAndGlyphs" >Vendor</text>
<text x="770.16" y="369.60" font-size="12" font-weight="normal" fill="#111" stroke="#111" stroke-width="0.45" textLength="50.95" lengthAdjust="spacingAndGlyphs" >Due Date</text>
<text x="829.98" y="369.60" font-size="12" font-weight="normal" fill="#111" stroke="#111" stroke-width="0.45" textLength="39.26" lengthAdjust="spacingAndGlyphs" >Doc No</text>
<text x="898.45" y="370.60" font-size="12" font-weight="normal" fill="#222" stroke="#222" stroke-width="0.2" textLength="46.08" lengthAdjust="spacingAndGlyphs" >On Time</text>
<text x="968.20" y="370.80" font-size="12" font-weight="normal" fill="#222" stroke="#222" stroke-width="0.2" textLength="63.42" lengthAdjust="spacingAndGlyphs" >01-14 Days</text>
<text x="1047.96" y="370.80" font-size="12" font-weight="normal" fill="#222" stroke="#222" stroke-width="0.2" textLength="63.86" lengthAdjust="spacingAndGlyphs" >15-30 Days</text>
<text x="1133.85" y="370.80" font-size="12" font-weight="normal" fill="#222" stroke="#222" stroke-width="0.2" textLength="52.05" lengthAdjust="spacingAndGlyphs" >91+ Days</text>
<text x="1224.66" y="370.80" font-size="12" font-weight="bold" fill="#111" textLength="31.48" lengthAdjust="spacingAndGlyphs" >Total</text>
<rect x="880" y="394" width="401" height="1" fill="#9b9b9b" />
<rect x="764" y="394" width="116" height="1" fill="#9b9b9b" />
<rect x="564" y="394" width="200" height="1" fill="#9b9b9b" />
<text x="569.65" y="388.50" font-size="11.5" font-weight="normal" fill="#111" stroke="#111" stroke-width="0.25" textLength="59.19" lengthAdjust="spacingAndGlyphs" >Grand Total</text>
<rect x="570" y="389.6" width="58.5" height="1.1" fill="#111" />
<text x="898.06" y="388.70" font-size="12.5" font-weight="normal" fill="#1a1a1a" stroke="#1a1a1a" stroke-width="0.12" textLength="58.11" lengthAdjust="spacingAndGlyphs" >1,753,324</text>
<text x="989.17" y="388.70" font-size="12.5" font-weight="normal" fill="#1a1a1a" stroke="#1a1a1a" stroke-width="0.12" textLength="47.22" lengthAdjust="spacingAndGlyphs" >966,964</text>
<text x="1083.43" y="388.70" font-size="12.5" font-weight="normal" fill="#1a1a1a" stroke="#1a1a1a" stroke-width="0.12" textLength="32.69" lengthAdjust="spacingAndGlyphs" >1,921</text>
<text x="1177.08" y="388.70" font-size="12.5" font-weight="normal" fill="#1a1a1a" stroke="#1a1a1a" stroke-width="0.12" textLength="18.88" lengthAdjust="spacingAndGlyphs" >-50</text>
<text x="1217.76" y="388.70" font-size="12.5" font-weight="normal" fill="#1a1a1a" stroke="#1a1a1a" stroke-width="0.12" textLength="58.11" lengthAdjust="spacingAndGlyphs" >2,722,159</text>
<rect x="880" y="414" width="401" height="1" fill="#9b9b9b" />
<rect x="764" y="414" width="116" height="1" fill="#9b9b9b" />
<rect x="564" y="414" width="200" height="1" fill="#9b9b9b" />
<text x="570.10" y="408.70" font-size="11" font-weight="normal" fill="#111" stroke="#111" stroke-width="0.25" textLength="63.85" lengthAdjust="spacingAndGlyphs" >ADPSERVICE</text>
<text x="641.35" y="408.70" font-size="11" font-weight="normal" fill="#111" stroke="#111" stroke-width="0.25" textLength="116.17" lengthAdjust="spacingAndGlyphs" >Automatic Data Proce..</text>
<rect x="570" y="410.10" width="186.60" height="1.1" fill="#111" />
<text x="770.00" y="408.90" font-size="11.7" font-weight="normal" fill="#222" stroke="#222" stroke-width="0.2" textLength="46.02" lengthAdjust="spacingAndGlyphs" >10/11/27</text>
<text x="830.04" y="408.90" font-size="11.7" font-weight="normal" fill="#111" stroke="#111" stroke-width="0.2" textLength="38.65" lengthAdjust="spacingAndGlyphs" >005281</text>
<rect x="830.3" y="410.20" width="37.6" height="1.1" fill="#111" />
<text x="927.05" y="407.70" font-size="11.3" font-weight="normal" fill="#222" stroke="#222" stroke-width="0.2" textLength="28.84" lengthAdjust="spacingAndGlyphs" >3,065</text>
<text x="1243.52" y="408.80" font-size="12.5" font-weight="normal" fill="#1a1a1a" stroke="#1a1a1a" stroke-width="0.12" textLength="32.53" lengthAdjust="spacingAndGlyphs" >3,065</text>
<rect x="880" y="434" width="401" height="1" fill="#9b9b9b" />
<rect x="764" y="434" width="116" height="1" fill="#9b9b9b" />
<text x="570.10" y="428.70" font-size="11" font-weight="normal" fill="#111" stroke="#111" stroke-width="0.25" textLength="58.50" lengthAdjust="spacingAndGlyphs" >AMERDOOR</text>
<text x="635.93" y="428.70" font-size="11" font-weight="normal" fill="#111" stroke="#111" stroke-width="0.25" textLength="115.01" lengthAdjust="spacingAndGlyphs" >American Door &amp; Glass</text>
<rect x="570" y="430.10" width="180.70" height="1.1" fill="#111" />
<text x="770.42" y="428.90" font-size="11.7" font-weight="normal" fill="#222" stroke="#222" stroke-width="0.2" textLength="46.91" lengthAdjust="spacingAndGlyphs" >09/24/24</text>
<text x="830.04" y="428.90" font-size="11.7" font-weight="normal" fill="#111" stroke="#111" stroke-width="0.2" textLength="38.65" lengthAdjust="spacingAndGlyphs" >002394</text>
<rect x="830.3" y="430.20" width="37.6" height="1.1" fill="#111" />
<text x="1189.81" y="427.70" font-size="11.3" font-weight="normal" fill="#222" stroke="#222" stroke-width="0.2" textLength="6.41" lengthAdjust="spacingAndGlyphs" >0</text>
<text x="1268.74" y="428.80" font-size="12.5" font-weight="normal" fill="#1a1a1a" stroke="#1a1a1a" stroke-width="0.12" textLength="7.23" lengthAdjust="spacingAndGlyphs" >0</text>
<rect x="880" y="454" width="401" height="1" fill="#9b9b9b" />
<rect x="764" y="454" width="116" height="1" fill="#9b9b9b" />
<rect x="564" y="454" width="200" height="1" fill="#9b9b9b" />
<text x="770.00" y="448.90" font-size="11.7" font-weight="normal" fill="#222" stroke="#222" stroke-width="0.2" textLength="46.02" lengthAdjust="spacingAndGlyphs" >11/17/24</text>
<text x="830.04" y="448.90" font-size="11.7" font-weight="normal" fill="#111" stroke="#111" stroke-width="0.2" textLength="38.65" lengthAdjust="spacingAndGlyphs" >002435</text>
<rect x="830.3" y="450.20" width="37.6" height="1.1" fill="#111" />
<text x="1189.81" y="447.70" font-size="11.3" font-weight="normal" fill="#222" stroke="#222" stroke-width="0.2" textLength="6.41" lengthAdjust="spacingAndGlyphs" >0</text>
<text x="1268.74" y="448.80" font-size="12.5" font-weight="normal" fill="#1a1a1a" stroke="#1a1a1a" stroke-width="0.12" textLength="7.23" lengthAdjust="spacingAndGlyphs" >0</text>
<rect x="880" y="474" width="401" height="1" fill="#9b9b9b" />
<rect x="764" y="474" width="116" height="1" fill="#9b9b9b" />
<rect x="564" y="474" width="200" height="1" fill="#9b9b9b" />
<text x="570.10" y="468.70" font-size="11" font-weight="normal" fill="#111" stroke="#111" stroke-width="0.25" textLength="53.90" lengthAdjust="spacingAndGlyphs" >ATDSECUR</text>
<text x="631.36" y="468.70" font-size="11" font-weight="normal" fill="#111" stroke="#111" stroke-width="0.25" textLength="123.52" lengthAdjust="spacingAndGlyphs" >ATD Security Services, I..</text>
<rect x="570" y="470.10" width="184.00" height="1.1" fill="#111" />
<text x="770.42" y="468.90" font-size="11.7" font-weight="normal" fill="#222" stroke="#222" stroke-width="0.2" textLength="46.02" lengthAdjust="spacingAndGlyphs" >09/11/27</text>
<text x="830.04" y="468.90" font-size="11.7" font-weight="normal" fill="#111" stroke="#111" stroke-width="0.2" textLength="38.65" lengthAdjust="spacingAndGlyphs" >005283</text>
<rect x="830.3" y="470.20" width="37.6" height="1.1" fill="#111" />
<text x="1017.21" y="467.70" font-size="11.3" font-weight="normal" fill="#222" stroke="#222" stroke-width="0.2" textLength="19.23" lengthAdjust="spacingAndGlyphs" >100</text>
<text x="1254.31" y="468.80" font-size="12.5" font-weight="normal" fill="#1a1a1a" stroke="#1a1a1a" stroke-width="0.12" textLength="21.69" lengthAdjust="spacingAndGlyphs" >100</text>
<rect x="880" y="494" width="401" height="1" fill="#9b9b9b" />
<rect x="764" y="494" width="116" height="1" fill="#9b9b9b" />
<text x="569.31" y="488.70" font-size="11" font-weight="normal" fill="#111" stroke="#111" stroke-width="0.25" textLength="42.50" lengthAdjust="spacingAndGlyphs" >BCPHCO</text>
<text x="618.29" y="488.70" font-size="11" font-weight="normal" fill="#111" stroke="#111" stroke-width="0.25" textLength="101.17" lengthAdjust="spacingAndGlyphs" >BC Phillips Company</text>
<rect x="570" y="490.10" width="149.60" height="1.1" fill="#111" />
<text x="770.42" y="488.90" font-size="11.7" font-weight="normal" fill="#222" stroke="#222" stroke-width="0.2" textLength="46.91" lengthAdjust="spacingAndGlyphs" >08/05/24</text>
<text x="830.04" y="488.90" font-size="11.7" font-weight="normal" fill="#111" stroke="#111" stroke-width="0.2" textLength="38.65" lengthAdjust="spacingAndGlyphs" >002408</text>
<rect x="830.3" y="490.20" width="37.6" height="1.1" fill="#111" />
<text x="1189.81" y="487.70" font-size="11.3" font-weight="normal" fill="#222" stroke="#222" stroke-width="0.2" textLength="6.41" lengthAdjust="spacingAndGlyphs" >0</text>
<text x="1268.74" y="488.80" font-size="12.5" font-weight="normal" fill="#1a1a1a" stroke="#1a1a1a" stroke-width="0.12" textLength="7.23" lengthAdjust="spacingAndGlyphs" >0</text>
<rect x="880" y="514" width="401" height="1" fill="#9b9b9b" />
<rect x="764" y="514" width="116" height="1" fill="#9b9b9b" />
<text x="770.42" y="508.90" font-size="11.7" font-weight="normal" fill="#222" stroke="#222" stroke-width="0.2" textLength="46.91" lengthAdjust="spacingAndGlyphs" >09/07/24</text>
<text x="830.04" y="508.90" font-size="11.7" font-weight="normal" fill="#111" stroke="#111" stroke-width="0.2" textLength="38.65" lengthAdjust="spacingAndGlyphs" >002450</text>
<rect x="830.3" y="510.20" width="37.6" height="1.1" fill="#111" />
<text x="1189.81" y="507.70" font-size="11.3" font-weight="normal" fill="#222" stroke="#222" stroke-width="0.2" textLength="6.41" lengthAdjust="spacingAndGlyphs" >0</text>
<text x="1268.74" y="508.80" font-size="12.5" font-weight="normal" fill="#1a1a1a" stroke="#1a1a1a" stroke-width="0.12" textLength="7.23" lengthAdjust="spacingAndGlyphs" >0</text>
<rect x="880" y="534" width="401" height="1" fill="#9b9b9b" />
<rect x="764" y="534" width="116" height="1" fill="#9b9b9b" />
<rect x="564" y="534" width="200" height="1" fill="#9b9b9b" />
<text x="770.42" y="528.90" font-size="11.7" font-weight="normal" fill="#222" stroke="#222" stroke-width="0.2" textLength="46.91" lengthAdjust="spacingAndGlyphs" >09/09/24</text>
<text x="830.04" y="528.90" font-size="11.7" font-weight="normal" fill="#111" stroke="#111" stroke-width="0.2" textLength="38.65" lengthAdjust="spacingAndGlyphs" >002442</text>
<rect x="830.3" y="530.20" width="37.6" height="1.1" fill="#111" />
<text x="1189.81" y="527.70" font-size="11.3" font-weight="normal" fill="#222" stroke="#222" stroke-width="0.2" textLength="6.41" lengthAdjust="spacingAndGlyphs" >0</text>
<text x="1268.74" y="528.80" font-size="12.5" font-weight="normal" fill="#1a1a1a" stroke="#1a1a1a" stroke-width="0.12" textLength="7.23" lengthAdjust="spacingAndGlyphs" >0</text>
<rect x="880" y="554" width="401" height="1" fill="#9b9b9b" />
<rect x="764" y="554" width="116" height="1" fill="#9b9b9b" />
<text x="569.31" y="548.70" font-size="11" font-weight="normal" fill="#111" stroke="#111" stroke-width="0.25" textLength="69.54" lengthAdjust="spacingAndGlyphs" >BECKERROOF</text>
<text x="645.38" y="548.70" font-size="11" font-weight="normal" fill="#111" stroke="#111" stroke-width="0.25" textLength="75.74" lengthAdjust="spacingAndGlyphs" >Becker Roofing</text>
<rect x="570" y="550.10" width="150.50" height="1.1" fill="#111" />
<text x="770.42" y="548.90" font-size="11.7" font-weight="normal" fill="#222" stroke="#222" stroke-width="0.2" textLength="46.91" lengthAdjust="spacingAndGlyphs" >06/29/24</text>
<text x="830.04" y="548.90" font-size="11.7" font-weight="normal" fill="#111" stroke="#111" stroke-width="0.2" textLength="38.65" lengthAdjust="spacingAndGlyphs" >002407</text>
<rect x="830.3" y="550.20" width="37.6" height="1.1" fill="#111" />
<text x="1189.81" y="547.70" font-size="11.3" font-weight="normal" fill="#222" stroke="#222" stroke-width="0.2" textLength="6.41" lengthAdjust="spacingAndGlyphs" >0</text>
<text x="1268.74" y="548.80" font-size="12.5" font-weight="normal" fill="#1a1a1a" stroke="#1a1a1a" stroke-width="0.12" textLength="7.23" lengthAdjust="spacingAndGlyphs" >0</text>
<rect x="880" y="574" width="401" height="1" fill="#9b9b9b" />
<rect x="764" y="574" width="116" height="1" fill="#9b9b9b" />
<rect x="564" y="574" width="200" height="1" fill="#9b9b9b" />
<text x="770.42" y="568.90" font-size="11.7" font-weight="normal" fill="#222" stroke="#222" stroke-width="0.2" textLength="46.91" lengthAdjust="spacingAndGlyphs" >07/01/24</text>
<text x="830.04" y="568.90" font-size="11.7" font-weight="normal" fill="#111" stroke="#111" stroke-width="0.2" textLength="38.65" lengthAdjust="spacingAndGlyphs" >002397</text>
<rect x="830.3" y="570.20" width="37.6" height="1.1" fill="#111" />
<text x="1189.81" y="567.70" font-size="11.3" font-weight="normal" fill="#222" stroke="#222" stroke-width="0.2" textLength="6.41" lengthAdjust="spacingAndGlyphs" >0</text>
<text x="1268.74" y="568.80" font-size="12.5" font-weight="normal" fill="#1a1a1a" stroke="#1a1a1a" stroke-width="0.12" textLength="7.23" lengthAdjust="spacingAndGlyphs" >0</text>
<rect x="880" y="594" width="401" height="1" fill="#9b9b9b" />
<rect x="764" y="594" width="116" height="1" fill="#9b9b9b" />
<text x="569.31" y="588.70" font-size="11" font-weight="normal" fill="#111" stroke="#111" stroke-width="0.25" textLength="66.77" lengthAdjust="spacingAndGlyphs" >BOWMANSUR</text>
<text x="642.49" y="588.70" font-size="11" font-weight="normal" fill="#111" stroke="#111" stroke-width="0.25" textLength="101.86" lengthAdjust="spacingAndGlyphs" >Bowman Surveying</text>
<rect x="570" y="590.10" width="173.70" height="1.1" fill="#111" />
<text x="770.42" y="588.90" font-size="11.7" font-weight="normal" fill="#222" stroke="#222" stroke-width="0.2" textLength="46.91" lengthAdjust="spacingAndGlyphs" >04/20/24</text>
<text x="830.04" y="588.90" font-size="11.7" font-weight="normal" fill="#111" stroke="#111" stroke-width="0.2" textLength="38.65" lengthAdjust="spacingAndGlyphs" >002399</text>
<rect x="830.3" y="590.20" width="37.6" height="1.1" fill="#111" />
<text x="1189.81" y="587.70" font-size="11.3" font-weight="normal" fill="#222" stroke="#222" stroke-width="0.2" textLength="6.41" lengthAdjust="spacingAndGlyphs" >0</text>
<text x="1268.74" y="588.80" font-size="12.5" font-weight="normal" fill="#1a1a1a" stroke="#1a1a1a" stroke-width="0.12" textLength="7.23" lengthAdjust="spacingAndGlyphs" >0</text>
<rect x="880" y="614" width="401" height="1" fill="#9b9b9b" />
<rect x="764" y="614" width="116" height="1" fill="#9b9b9b" />
<rect x="564" y="614" width="200" height="1" fill="#9b9b9b" />
<text x="770.42" y="608.90" font-size="11.7" font-weight="normal" fill="#222" stroke="#222" stroke-width="0.2" textLength="46.91" lengthAdjust="spacingAndGlyphs" >07/09/24</text>
<text x="830.04" y="608.90" font-size="11.7" font-weight="normal" fill="#111" stroke="#111" stroke-width="0.2" textLength="38.65" lengthAdjust="spacingAndGlyphs" >002445</text>
<rect x="830.3" y="610.20" width="37.6" height="1.1" fill="#111" />
<text x="1189.81" y="607.70" font-size="11.3" font-weight="normal" fill="#222" stroke="#222" stroke-width="0.2" textLength="6.41" lengthAdjust="spacingAndGlyphs" >0</text>
<text x="1268.74" y="608.80" font-size="12.5" font-weight="normal" fill="#1a1a1a" stroke="#1a1a1a" stroke-width="0.12" textLength="7.23" lengthAdjust="spacingAndGlyphs" >0</text>
<rect x="880" y="634" width="401" height="1" fill="#9b9b9b" />
<rect x="764" y="634" width="116" height="1" fill="#9b9b9b" />
<rect x="564" y="634" width="200" height="1" fill="#9b9b9b" />
<text x="569.60" y="628.70" font-size="11" font-weight="normal" fill="#111" stroke="#111" stroke-width="0.25" textLength="66.78" lengthAdjust="spacingAndGlyphs" >CBSITEWORK</text>
<text x="643.51" y="628.70" font-size="11" font-weight="normal" fill="#111" stroke="#111" stroke-width="0.25" textLength="86.62" lengthAdjust="spacingAndGlyphs" >CB Sitework, Inc.</text>
<rect x="570" y="630.10" width="159.20" height="1.1" fill="#111" />
<text x="770.42" y="628.90" font-size="11.7" font-weight="normal" fill="#222" stroke="#222" stroke-width="0.2" textLength="46.91" lengthAdjust="spacingAndGlyphs" >05/26/24</text>
<text x="830.04" y="628.90" font-size="11.7" font-weight="normal" fill="#111" stroke="#111" stroke-width="0.2" textLength="38.65" lengthAdjust="spacingAndGlyphs" >002448</text>
<rect x="830.3" y="630.20" width="37.6" height="1.1" fill="#111" />
<text x="1189.81" y="627.70" font-size="11.3" font-weight="normal" fill="#222" stroke="#222" stroke-width="0.2" textLength="6.41" lengthAdjust="spacingAndGlyphs" >0</text>
<text x="1268.74" y="628.80" font-size="12.5" font-weight="normal" fill="#1a1a1a" stroke="#1a1a1a" stroke-width="0.12" textLength="7.23" lengthAdjust="spacingAndGlyphs" >0</text>
<rect x="880" y="654" width="401" height="1" fill="#9b9b9b" />
<rect x="764" y="654" width="116" height="1" fill="#9b9b9b" />
<rect x="564" y="654" width="200" height="1" fill="#9b9b9b" />
<text x="569.60" y="648.70" font-size="11" font-weight="normal" fill="#111" stroke="#111" stroke-width="0.25" textLength="58.51" lengthAdjust="spacingAndGlyphs" >CENTRALEL</text>
<text x="635.01" y="648.70" font-size="11" font-weight="normal" fill="#111" stroke="#111" stroke-width="0.25" textLength="85.18" lengthAdjust="spacingAndGlyphs" >Central Electric</text>
<rect x="570" y="650.10" width="150.00" height="1.1" fill="#111" />
<text x="770.42" y="648.90" font-size="11.7" font-weight="normal" fill="#222" stroke="#222" stroke-width="0.2" textLength="46.91" lengthAdjust="spacingAndGlyphs" >07/21/24</text>
<text x="830.04" y="648.90" font-size="11.7" font-weight="normal" fill="#111" stroke="#111" stroke-width="0.2" textLength="38.65" lengthAdjust="spacingAndGlyphs" >002460</text>
<rect x="830.3" y="650.20" width="37.6" height="1.1" fill="#111" />
<text x="1189.81" y="647.70" font-size="11.3" font-weight="normal" fill="#222" stroke="#222" stroke-width="0.2" textLength="6.41" lengthAdjust="spacingAndGlyphs" >0</text>
<text x="1268.74" y="648.80" font-size="12.5" font-weight="normal" fill="#1a1a1a" stroke="#1a1a1a" stroke-width="0.12" textLength="7.23" lengthAdjust="spacingAndGlyphs" >0</text>
</g>
<rect x="1281" y="374" width="17" height="268" fill="#f3f3f3" />
<rect x="1281" y="374" width="17" height="53" fill="#e0e0e0" />
<rect x="317" y="2" width="1" height="294" fill="#dedede" />
<rect x="4" y="295" width="314" height="1" fill="#dedede" />
<rect x="1199" y="2" width="1" height="317" fill="#dedede" />
<rect x="564" y="318" width="636" height="1" fill="#dedede" />
</svg></body></html>
